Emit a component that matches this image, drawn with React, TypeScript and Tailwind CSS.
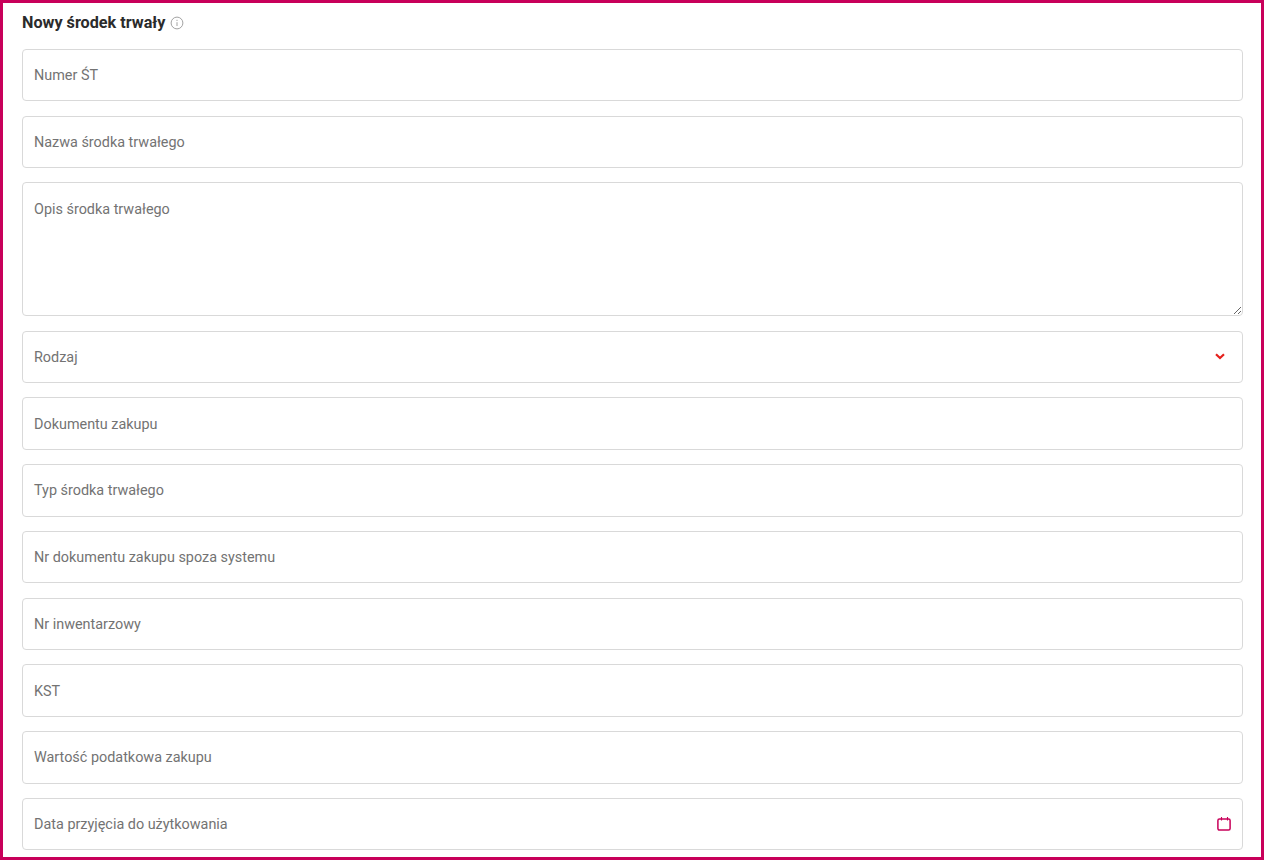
import type { ReactNode } from "react";

const fieldBox =
  "flex h-[52.5px] w-full shrink-0 items-center justify-between rounded border border-[#d9d9d9] bg-white pl-[11px] pr-[11px] pt-[1.5px] text-[14.4px] text-[#737373]";

function Field({ label, icon }: { label: string; icon?: ReactNode }) {
  return (
    <div className={fieldBox}>
      <span>{label}</span>
      {icon}
    </div>
  );
}

function InfoIcon() {
  return (
    <svg width="14" height="14" viewBox="0 0 14 14" fill="none" stroke="#a3a3a3" strokeWidth="1">
      <circle cx="7" cy="7" r="5.9" />
      <path d="M7 6.2v3.8M7 3.8v1.2" />
    </svg>
  );
}

function ChevronIcon() {
  return (
    <svg width="10" height="7" viewBox="0 0 10 7" fill="none" stroke="#e5201c" strokeWidth="2.2" className="mr-[6px] -mt-[2px]">
      <path d="M1 1.2l4 3.8 4-3.8" />
    </svg>
  );
}

function CalendarIcon() {
  return (
    <svg width="14" height="14" viewBox="0 0 14 14" fill="none" stroke="#c8005a" className="-mt-[1px]">
      <rect x="0.9" y="1.9" width="12.2" height="11.2" rx="1.5" strokeWidth="1.5" />
      <path d="M4.5 0v3.5M10.5 0v3.5" strokeWidth="1.1" />
    </svg>
  );
}

export default function App() {
  return (
    <div className="h-[860px] w-[1264px] overflow-hidden border-[3px] border-[#c8005a] bg-white font-['Roboto',sans-serif]">
      <div className="flex flex-col pl-[19px] pr-[18px]">
        <div className="flex h-[45.9px] shrink-0 items-center gap-[5px] pb-[6px]">
          <span className="text-[16.2px] font-bold text-[#2b2b2b]">Nowy środek trwały</span>
          <InfoIcon />
        </div>
        <div className="flex flex-col gap-[14.24px]">
          <Field label="Numer ŚT" />
          <Field label="Nazwa środka trwałego" />
          <textarea
            placeholder="Opis środka trwałego"
            className="mb-[0.1px] h-[134px] w-full shrink-0 rounded border border-[#d9d9d9] bg-white px-[11px] pb-[17px] pt-[17.5px] text-[14.4px] leading-[18px] text-[#737373] outline-none placeholder:text-[#737373]"
          />
          <Field label="Rodzaj" icon={<ChevronIcon />} />
          <Field label="Dokumentu zakupu" />
          <Field label="Typ środka trwałego" />
          <Field label="Nr dokumentu zakupu spoza systemu" />
          <Field label="Nr inwentarzowy" />
          <Field label="KST" />
          <Field label="Wartość podatkowa zakupu" />
          <Field label="Data przyjęcia do użytkowania" icon={<CalendarIcon />} />
        </div>
      </div>
    </div>
  );
}
